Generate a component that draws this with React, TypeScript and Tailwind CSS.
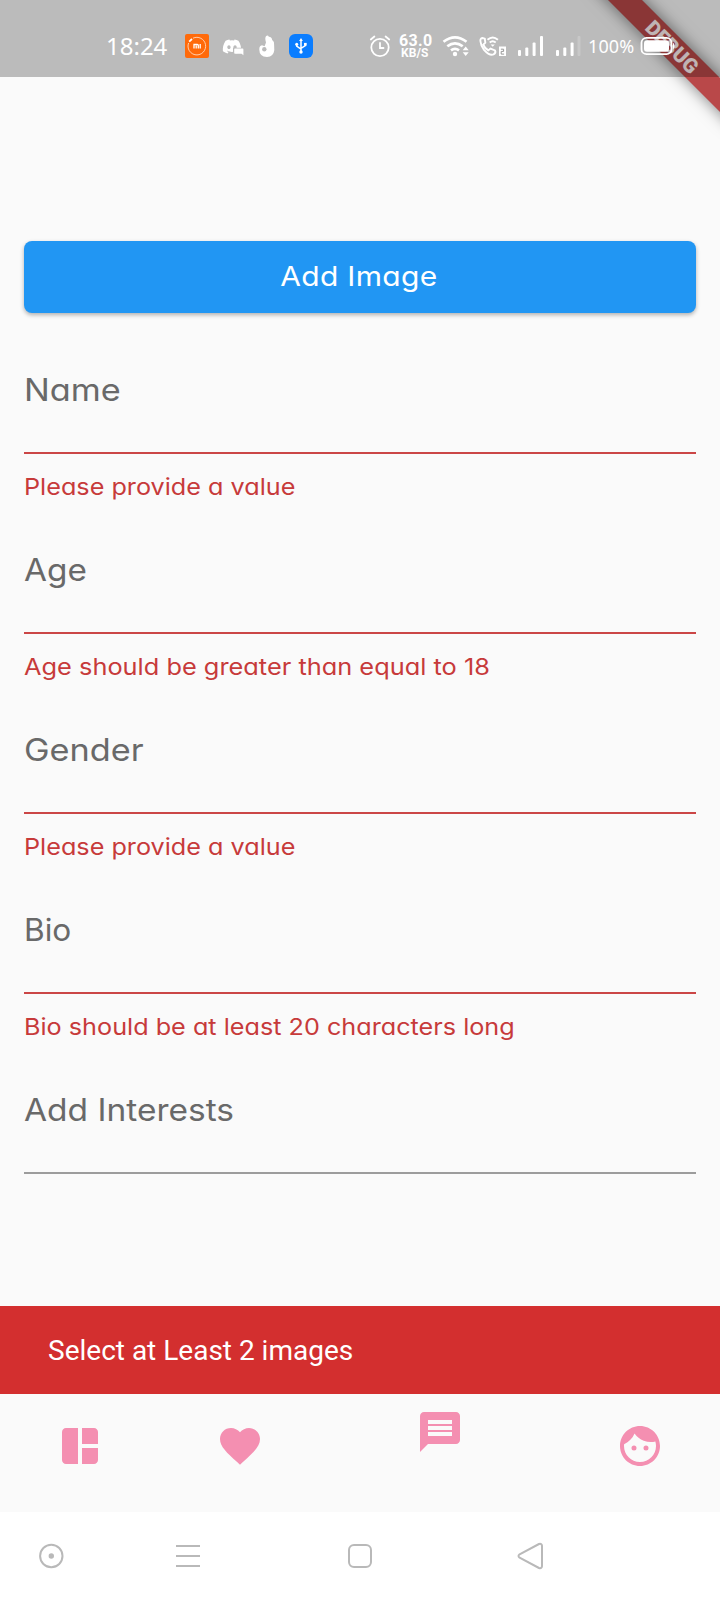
import type { ReactNode } from "react";
import { MdFace, MdFavorite, MdMessage } from "react-icons/md";
import { FaDiscord } from "react-icons/fa";

const geometric = "font-['Inter','Liberation_Sans',sans-serif] [font-feature-settings:'cv11'] whitespace-nowrap";

type FieldProps = {
  label: string;
  labelClass: string;
  error?: string;
  errorClass?: string;
};

const fields: FieldProps[] = [
  { label: "Name", labelClass: "scale-x-[1.105]", error: "Please provide a value", errorClass: "scale-x-[1.096]" },
  { label: "Age", labelClass: "scale-x-[1.075]", error: "Age should be greater than equal to 18", errorClass: "scale-x-[1.103]" },
  { label: "Gender", labelClass: "scale-x-[1.105]", error: "Please provide a value", errorClass: "scale-x-[1.096]" },
  { label: "Bio", labelClass: "scale-x-[1.020]", error: "Bio should be at least 20 characters long", errorClass: "scale-x-[1.096]" },
  { label: "Add Interests", labelClass: "scale-x-[1.080]" },
];

function Field({ label, labelClass, error, errorClass }: FieldProps) {
  return (
    <div className="flex h-[180px] flex-col items-start">
      <label className={`${geometric} origin-left text-[31px] leading-[40px] text-[#696969] ${labelClass}`}>{label}</label>
      <div className={`mt-[42px] h-[2px] w-full ${error ? "bg-[#cb4646]" : "bg-[#9c9c9c]"}`} />
      {error && (
        <p className={`${geometric} mt-[17px] origin-left text-[23px] leading-[32px] text-[#c73a3a] ${errorClass}`}>{error}</p>
      )}
    </div>
  );
}

function Slot({ className, children }: { className: string; children: ReactNode }) {
  return <div className={`flex shrink-0 items-center ${className}`}>{children}</div>;
}

function StatusBar() {
  return (
    <header className="relative flex h-[77px] shrink-0 items-start bg-black/25 pl-[106px] pt-[34px] text-white">
      <Slot className="h-6 w-[79px]">
        <span className="font-['Noto_Sans',sans-serif] text-[24px] leading-6">18:24</span>
      </Slot>
      <Slot className="h-6 w-[36px]">
        <svg width="24" height="24" viewBox="0 0 24 24">
          <rect width="24" height="24" rx="2" fill="#ff6a0a" />
          <path d="M8 4.2A8.8 8.8 0 1 1 3.6 9" fill="none" stroke="#ffd9bd" strokeWidth="0.9" />
          <path d="M4.2 7.6 7 5" stroke="#fff" strokeWidth="1.8" />
          <path d="M9 14.5v-4h3.3q1 0 1 1v3M11.200 11.500v3M15.200 10v4.500" fill="none" stroke="#fff" strokeWidth="1.300" />
        </svg>
      </Slot>
      <Slot className="h-6 w-[37px]">
        <svg width="24" height="24" viewBox="0 0 24 24">
          <g transform="translate(1 2.5)">
            <FaDiscord size={20} />
          </g>
          <path d="M12 13.8h11v7.4l-2-1.6h-9z" fill="#bbb" />
          <path d="M14 14.6h7.600q.8 0 .8.8v5.800l-1.800-1.500H14q-.8 0-.8-.8v-3.500q0-.8.8-.8z" fill="currentColor" />
        </svg>
      </Slot>
      <Slot className="h-6 w-[31px]">
        <svg width="18" height="24" viewBox="0 0 18 24" fill="none">
          <path d="M8 8.500Q6.500 3.500 8.200 1.900q1.800-1.200 2.600.9 3.200.3 3.400 3.300 2.400 1.600 1.900 4.400l.2 5.500q-.6 6.500-7.300 7.100Q1.300 22.600 1.300 15.500q-.1-4 2.700-4.300l2.600 1z" fill="currentColor" />
          <circle cx="6.300" cy="15.200" r="2.200" fill="#bbb" />
        </svg>
      </Slot>
      <Slot className="h-6 w-[80px]">
        <svg width="24" height="24" viewBox="0 0 24 24" fill="none" stroke="#fff" strokeWidth="1.500">
          <rect width="24" height="24" rx="6" fill="#0a7dff" stroke="none" />
          <path d="M12 6v12M7.700 10v2.200l4.300 3M16.300 10v1.700l-4.300 2.700" />
          <path d="m12 4 1.900 3h-3.800z" fill="#fff" stroke="none" />
          <circle cx="12" cy="18" r="1.700" fill="#fff" stroke="none" />
          <circle cx="7.700" cy="10.300" r="1.500" fill="#fff" stroke="none" />
          <path d="M15 8.900h2.700v2.700H15z" fill="#fff" stroke="none" />
        </svg>
      </Slot>
      <Slot className="h-6 w-[30px]">
        <svg width="22" height="24" viewBox="0 0 22 24" fill="none" stroke="currentColor" strokeWidth="1.800" strokeLinecap="round">
          <circle cx="11" cy="13.500" r="8.700" />
          <path d="M11 9v5h3.500M1.800 5.500l3.600-3M20.200 5.500l-3.600-3" />
        </svg>
      </Slot>
      <div className="flex h-6 w-[43px] shrink-0 flex-col items-start font-['Roboto',sans-serif] font-bold">
        <span className="mt-[-1px] text-[16px] leading-[15px] tracking-[0.300px]">63.0</span>
        <span className="ml-[2px] text-[12px] leading-[11px] tracking-[0.100px]">KB/S</span>
      </div>
      <Slot className="h-6 w-[37px]">
        <svg width="28" height="24" viewBox="0 0 28 24" fill="none" stroke="currentColor" strokeWidth="2.700">
          <path d="M1.500 7.800q11.500-9 23 0M5.300 12.300q7.700-6 15.400 0M9 16.300q4-3 8 0" />
          <circle cx="13" cy="20" r="2.200" fill="currentColor" stroke="none" />
          <path d="m20.700 16.200 3-3.700 3 3.700zM20.700 18.200l3 3.700 3-3.700z" fill="currentColor" stroke="none" />
        </svg>
      </Slot>
      <Slot className="h-6 w-[39px]">
        <svg width="28" height="24" viewBox="0 0 28 24" fill="none" stroke="currentColor" strokeWidth="1.900">
          <path d="M1.500 7.500Q.8 4.500 3.500 4l2.300.7.500 4-2 2q1.500 3.800 5 5.700l2.200-1.900 4.500 1.900q1.300 2.600-1.500 4Q10.500 22 5 15.800 1.800 11.800 1.500 7.500z" />
          <path d="M8.500 5.800q5.200-4.600 10.400 0M10.700 8.500q3-2.500 6 0" />
          <path d="m11.600 10.400 2.100 2.300 2.100-2.300z" fill="currentColor" stroke="none" />
          <rect x="20" y="12.500" width="7" height="9.500" fill="currentColor" stroke="none" />
          <path d="M21.900 15.200h2.700v2.200h-2.400v2.700h2.900" stroke="#999" strokeWidth="1" />
        </svg>
      </Slot>
      <Slot className="h-6 w-[37px]">
        <svg width="26" height="24" viewBox="0 0 26 24" fill="currentColor">
          <rect y="16" width="3" height="6" rx="1" />
          <rect x="7.300" y="13.500" width="3" height="8.500" rx="1" />
          <rect x="14.600" y="8.500" width="3" height="13.500" rx="1" />
          <rect x="22" y="2" width="3" height="20" rx="1" />
        </svg>
      </Slot>
      <Slot className="h-6 w-[33px]">
        <svg width="26" height="24" viewBox="0 0 26 24" fill="currentColor">
          <rect x="1" y="16" width="3" height="6" rx="1" />
          <rect x="8.300" y="13.500" width="3" height="8.500" rx="1" />
          <rect x="15.600" y="8.500" width="3" height="13.500" rx="1" />
          <rect x="22.500" y="2" width="3" height="20" rx="1" opacity="0.200" />
        </svg>
      </Slot>
      <Slot className="h-6 w-[52px]">
        <span className="font-['Noto_Sans',sans-serif] text-[18px] leading-6 tracking-[0.100px]">100%</span>
      </Slot>
      <Slot className="h-6 w-[36px]">
        <svg width="36" height="24" viewBox="0 0 36 24" fill="none">
          <rect x="1.500" y="3.800" width="30" height="16.400" rx="5" stroke="currentColor" strokeWidth="1.800" />
          <rect x="4" y="6.200" width="25" height="11.600" rx="3" fill="currentColor" />
          <path d="M33 8.500q1.500 1 1.500 3.500t-1.500 3.500z" fill="currentColor" />
        </svg>
      </Slot>
    </header>
  );
}

function DebugBanner() {
  return (
    <div className="pointer-events-none absolute right-0 top-0 h-[160px] w-[160px] overflow-hidden">
      <div className="absolute left-[12px] top-[35px] flex h-6 w-[200px] rotate-45 items-center justify-center bg-[#b94849] font-['Roboto',sans-serif] text-[20.400px] font-black leading-6 text-[#fff0f0] shadow-[0_0_16px_rgba(0,0,0,0.5)]">
        DEBUG
      </div>
    </div>
  );
}

function TabBar() {
  return (
    <nav className="flex h-[118px] shrink-0 items-start bg-[#fafafa] pl-[56px] text-[#f48fb1]">
      <svg className="mr-[112px] mt-[28px] shrink-0" width="48" height="48" viewBox="0 0 24 24" fill="currentColor">
        <path d="M11 21H5c-1.100 0-2-.9-2-2V5c0-1.100.9-2 2-2h6v18zM13 21h6c1.100 0 2-.9 2-2v-6h-8v8zM21 11V5c0-1.100-.9-2-2-2h-6v8h8z" />
      </svg>
      <MdFavorite className="mr-[152px] mt-[28px] shrink-0" size={48} />
      <MdMessage className="mr-[152px] mt-[14px] shrink-0" size={48} />
      <MdFace className="mt-[28px] shrink-0" size={48} />
    </nav>
  );
}

function SystemNavigation() {
  return (
    <footer className="flex h-[88px] shrink-0 items-center bg-white pl-[38px] text-[#b9b9b9]">
      <svg className="mr-[111px]" width="26" height="26" viewBox="0 0 26 26" fill="none" stroke="currentColor" strokeWidth="2">
        <circle cx="13.300" cy="13" r="11.200" />
        <circle cx="13.300" cy="13" r="2.700" fill="currentColor" stroke="none" />
      </svg>
      <svg className="mr-[146px]" width="26" height="26" viewBox="0 0 26 26" stroke="currentColor" strokeWidth="2">
        <path d="M1 3h24M1 13h24M1 23h24" />
      </svg>
      <svg className="mr-[144px]" width="26" height="26" viewBox="0 0 26 26" fill="none" stroke="currentColor" strokeWidth="2">
        <rect x="2" y="2" width="22" height="22" rx="5" />
      </svg>
      <svg width="28" height="28" viewBox="0 0 28 28" fill="none" stroke="currentColor" strokeWidth="2" strokeLinejoin="round">
        <path d="M2.600 12.300 22 2q2.800-.8 3 1.800v20.400q-.2 2.600-3 1.800L2.600 15.700q-2.200-1.700 0-3.400z" />
      </svg>
    </footer>
  );
}

export default function App() {
  return (
    <div className="relative flex h-[1600px] w-[720px] flex-col overflow-hidden bg-[#fafafa]">
      <DebugBanner />
      <StatusBar />
      <main className="flex min-h-0 flex-1 flex-col px-6 pt-[164px]">
        <button className={`${geometric} mb-[57px] flex h-[72px] shrink-0 items-center justify-center rounded-[8px] bg-[#2196f3] pb-px text-[27px] leading-8 text-white shadow-[0_2px_4px_rgba(0,0,0,0.300)]`}>
          <span className="-ml-[2px] scale-x-[1.110] tracking-[0.300px]">Add Image</span>
        </button>
        {fields.map((field) => (
          <Field key={field.label} {...field} />
        ))}
      </main>
      <div className="flex h-[88px] shrink-0 items-center bg-[#d32f2f] pl-[48px] pt-[2px]">
        <span className="font-['Roboto',sans-serif] text-[28px] leading-8 text-white">Select at Least 2 images</span>
      </div>
      <TabBar />
      <SystemNavigation />
    </div>
  );
}
